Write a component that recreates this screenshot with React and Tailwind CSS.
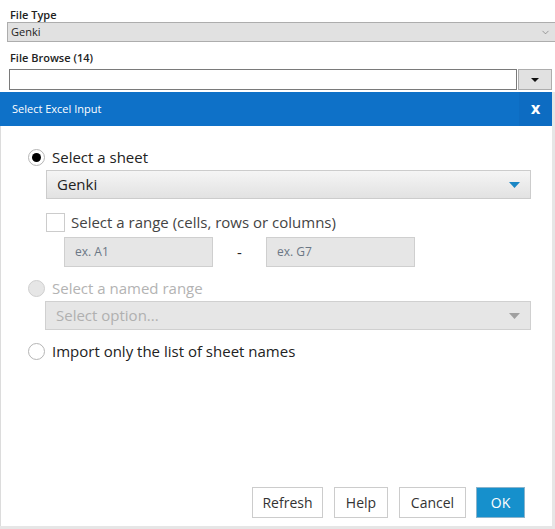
import { ChevronDown } from 'lucide-react';

const font = { fontFamily: '"Open Sans", "Noto Sans", sans-serif' };

const Radio = ({ checked, disabled, label }) => (
  <div className="flex items-center gap-[7px]">
    <span
      className={`w-[17px] h-[17px] rounded-full border flex items-center justify-center ${
        disabled ? 'border-[#cfcfcf] bg-[#e6e6e6]' : 'border-[#b5b5b5] bg-white'
      }`}
    >
      {checked && <span className="w-[9px] h-[9px] rounded-full bg-black" />}
    </span>
    <span className={`text-[15px] leading-5 ${disabled ? 'text-[#b3b3b3]' : 'text-[#222]'}`}>{label}</span>
  </div>
);

const Triangle = ({ color }) => (
  <svg width="11" height="6" viewBox="0 0 11 6">
    <path d="M0 0h11L5.5 6z" fill={color} />
  </svg>
);

export default function App() {
  return (
    <div className="w-[555px] h-[529px] bg-[#e6e6e6] overflow-hidden" style={font}>
      {/* Form behind the dialog */}
      <div className="bg-white pl-[7px] pt-[8px] h-[92px]">
        <div className="text-[11px] font-semibold text-[#222] leading-[14px] pl-[3px]">File Type</div>
        <div className="h-[20px] bg-[#e1e1e1] border border-[#adadad] border-r-0 flex items-center justify-between pl-[3px] pr-[4px]">
          <span className="text-[11px] text-[#222]">Genki</span>
          <ChevronDown className="w-[11px] h-[11px] text-[#777]" strokeWidth={1.5} />
        </div>
        <div className="text-[11px] font-semibold text-[#222] leading-[14px] pl-[3px] mt-[9px]">File Browse (14)</div>
        <div className="flex mt-[4px] pl-[2px] pr-[3px] gap-[1px]">
          <div className="h-[21px] flex-1 border border-[#7a7a7a] bg-white" />
          <div className="h-[21px] w-[34px] border border-[#adadad] bg-[#e1e1e1] flex items-center justify-center">
            <svg width="8" height="4" viewBox="0 0 8 4">
              <path d="M0 0h8L4 4z" fill="#111" />
            </svg>
          </div>
        </div>
      </div>

      {/* Dialog */}
      <div className="w-[552px] h-[434px] flex flex-col">
        <div className="h-[34px] bg-[#0e71c8] flex items-center justify-between">
          <span className="text-[11px] text-white pl-[12px]">Select Excel Input</span>
          <div className="w-[33px] h-full bg-[#0d6cc2] flex items-center justify-center">
            <span className="text-white text-[15px] font-bold leading-none" style={{ fontFamily: '"DejaVu Sans", sans-serif' }}>x</span>
          </div>
        </div>
        <div className="flex-1 bg-white border-l border-[#dcdcdc] flex flex-col pl-[27px] pr-[21px] pt-[21px] pb-[8px]">
          <Radio checked label="Select a sheet" />
          <div className="ml-[18px] mt-[3px] h-[29px] border border-[#ccc] bg-gradient-to-b from-[#f5f5f5] to-[#e2e2e2] flex items-center justify-between pl-[10px] pr-[10px]">
            <span className="text-[15px] text-[#222]">Genki</span>
            <Triangle color="#1a86c4" />
          </div>
          <div className="ml-[18px] mt-[13px] flex items-center gap-[6px]">
            <span className="w-[19px] h-[19px] border border-[#cccccc] bg-white" />
            <span className="text-[15px] text-[#444] leading-5">Select a range (cells, rows or columns)</span>
          </div>
          <div className="ml-[36px] mt-[5px] flex items-center">
            <div className="w-[149px] h-[30px] border border-[#cfcfcf] bg-[#e6e6e6] flex items-center pl-[10px] text-[12px] text-[#6b7785]">ex. A1</div>
            <span className="w-[53px] text-center text-[15px] text-[#222]">-</span>
            <div className="w-[149px] h-[30px] border border-[#cfcfcf] bg-[#e6e6e6] flex items-center pl-[10px] text-[12px] text-[#6b7785]">ex. G7</div>
          </div>
          <div className="mt-[11px]">
            <Radio disabled label="Select a named range" />
          </div>
          <div className="ml-[17px] mt-[3px] h-[29px] border border-[#d0d0d0] bg-[#e6e6e6] flex items-center justify-between pl-[10px] pr-[10px]">
            <span className="text-[15px] text-[#b0b0b0]">Select option...</span>
            <Triangle color="#a0a0a0" />
          </div>
          <div className="mt-[11px]">
            <Radio label="Import only the list of sheet names" />
          </div>
          <div className="flex-1" />
          <div className="flex justify-end gap-[11px] pr-[6px]">
            <button className="h-[31px] w-[71px] border border-[#cccccc] bg-white text-[14px] text-[#333]">Refresh</button>
            <button className="h-[31px] w-[54px] border border-[#cccccc] bg-white text-[14px] text-[#333]">Help</button>
            <button className="h-[31px] w-[67px] border border-[#cccccc] bg-white text-[14px] text-[#333]">Cancel</button>
            <button className="h-[31px] w-[49px] -ml-[1px] border border-[#8ab4cc] bg-[#1690cc] text-[14px] text-white">OK</button>
          </div>
        </div>
      </div>
    </div>
  );
}
